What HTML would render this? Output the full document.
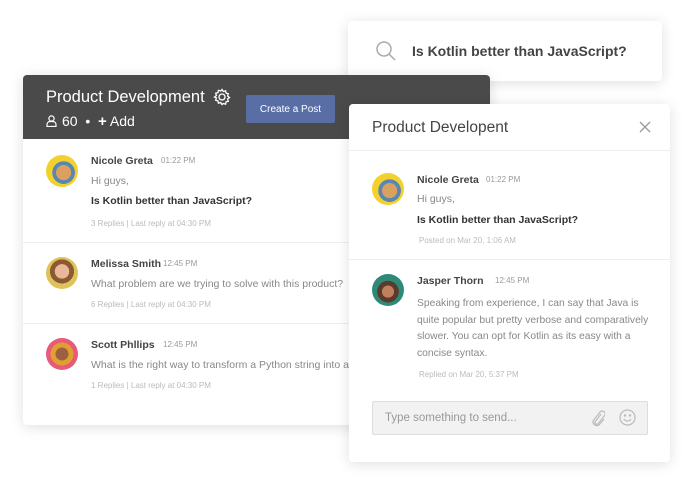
<!DOCTYPE html>
<html><head><style>
*{margin:0;padding:0;box-sizing:border-box}
body{width:693px;height:486px;background:#fff;font-family:"Liberation Sans",sans-serif;position:relative;overflow:hidden;color:#333}
.a{position:absolute;white-space:nowrap}
.card{position:absolute;background:#fff;border-radius:4px;box-shadow:0 2px 14px rgba(0,0,0,.13)}
.nm{font-size:10.5px;font-weight:bold;color:#444}
.tm{font-size:8px;color:#999}
.tx{font-size:10.5px;color:#888}
.bd{font-size:10.5px;font-weight:bold;color:#333}
.mt{font-size:8px;color:#bbb}
.av{position:absolute;width:32px;height:32px;border-radius:50%}
.y{background:radial-gradient(circle at 55% 55%,#d9a060 0 30%,#5a86b0 31% 45%,#f3d12c 46%)}
.line{position:absolute;height:1px;background:#eee}
</style></head><body>

<div class="card" style="left:348px;top:21px;width:314px;height:60px">
 <svg class="a" style="left:27px;top:19px" width="22" height="22" viewBox="0 0 22 22" fill="none" stroke="#aaa" stroke-width="1.5"><circle cx="9" cy="9" r="7"/><path d="M14 14l6 6"/></svg>
 <div class="a" style="left:64px;top:22px;font-size:14px;font-weight:bold;color:#444">Is Kotlin better than JavaScript?</div>
</div>

<div class="card" style="left:23px;top:75px;width:467px;height:350px;overflow:hidden">
 <div class="a" style="left:0;top:0;width:467px;height:64px;background:#4a4a4a"></div>
 <div class="a" style="left:23px;top:13px;font-size:16.5px;color:#fff">Product Development</div>
 <svg class="a" style="left:190px;top:13px" width="18" height="18" viewBox="0 0 18 18" fill="none" stroke="#fff" stroke-width="1.3"><circle cx="9" cy="9" r="3"/><path d="M9 1.5l1.3 2 2.3-.7.4 2.3 2.3.6-.7 2.3 1.9 1.5-1.9 1.5.7 2.3-2.3.6-.4 2.3-2.3-.7L9 16.5l-1.3-2-2.3.7-.4-2.3-2.3-.6.7-2.3L1.5 9l1.9-1.5-.7-2.3 2.3-.6.4-2.3 2.3.7z"/></svg>
 <svg class="a" style="left:23px;top:40px" width="11" height="12" viewBox="0 0 11 12" fill="none" stroke="#fff" stroke-width="1.2"><circle cx="5.5" cy="3.5" r="2.6"/><path d="M1 11.5v-2a3 3 0 013-3h3a3 3 0 013 3v2z"/></svg>
 <div class="a" style="left:39px;top:38px;font-size:14px;color:#fff">60 &nbsp;• &nbsp;<b style="font-size:15px">+</b> Add</div>
 <div class="a" style="left:223px;top:20px;width:89px;height:28px;background:#5a6ea6;border-radius:2px;color:#fff;font-size:10px;text-align:center;line-height:30px">Create a Post</div>

 <div class="av y" style="left:23px;top:80px"></div>
 <div class="a nm" style="left:68px;top:80px">Nicole Greta</div><div class="a tm" style="left:138px;top:81px">01:22 PM</div>
 <div class="a tx" style="left:68px;top:100px">Hi guys,</div>
 <div class="a bd" style="left:68px;top:120px">Is Kotlin better than JavaScript?</div>
 <div class="a mt" style="left:68px;top:144px">3 Replies | Last reply at 04:30 PM</div>
 <div class="line" style="left:0;top:167px;width:467px"></div>

 <div class="av" style="left:23px;top:182px;background:radial-gradient(circle at 50% 45%,#e9b89a 0 30%,#8a5a30 31% 50%,#e0c25a 51%)"></div>
 <div class="a nm" style="left:68px;top:183px">Melissa Smith</div><div class="a tm" style="left:140px;top:184px">12:45 PM</div>
 <div class="a tx" style="left:68px;top:203px">What problem are we trying to solve with this product?</div>
 <div class="a mt" style="left:68px;top:225px">6 Replies | Last reply at 04:30 PM</div>
 <div class="line" style="left:0;top:248px;width:467px"></div>

 <div class="av" style="left:23px;top:263px;background:radial-gradient(circle at 50% 50%,#9a6040 0 28%,#e0a030 29% 50%,#e85a7a 51%)"></div>
 <div class="a nm" style="left:68px;top:264px">Scott Phllips</div><div class="a tm" style="left:140px;top:265px">12:45 PM</div>
 <div class="a tx" style="left:68px;top:284px">What is the right way to transform a Python string into a</div>
 <div class="a mt" style="left:68px;top:306px">1 Replies | Last reply at 04:30 PM</div>
</div>

<div class="card" style="left:349px;top:104px;width:321px;height:358px">
 <div class="a" style="left:23px;top:15px;font-size:15.5px;color:#444">Product Developent</div>
 <svg class="a" style="left:290px;top:17px" width="12" height="12" viewBox="0 0 12 12" stroke="#999" stroke-width="1.3"><path d="M1 1l10 10M11 1L1 11"/></svg>
 <div class="line" style="left:0;top:46px;width:321px"></div>
 <div class="av y" style="left:23px;top:69px"></div>
 <div class="a nm" style="left:68px;top:70px">Nicole Greta</div><div class="a tm" style="left:137px;top:71px">01:22 PM</div>
 <div class="a tx" style="left:68px;top:89px">Hi guys,</div>
 <div class="a bd" style="left:68px;top:110px">Is Kotlin better than JavaScript?</div>
 <div class="a mt" style="left:70px;top:132px">Posted on Mar 20, 1:06 AM</div>
 <div class="line" style="left:0;top:155px;width:321px"></div>
 <div class="av" style="left:23px;top:170px;background:radial-gradient(circle at 50% 55%,#c08060 0 25%,#5a3a2a 26% 45%,#2e8a78 46%)"></div>
 <div class="a nm" style="left:68px;top:171px">Jasper Thorn</div><div class="a tm" style="left:146px;top:172px">12:45 PM</div>
 <div class="a tx" style="left:68px;top:192px;line-height:16.5px;white-space:normal;width:236px;font-size:10.3px">Speaking from experience, I can say that Java is quite popular but pretty verbose and comparatively slower. You can opt for Kotlin as its easy with a concise syntax.</div>
 <div class="a mt" style="left:70px;top:266px">Replied on Mar 20, 5:37 PM</div>
 <div class="a" style="left:23px;top:297px;width:276px;height:34px;background:#f2f2f2;border:1px solid #ddd;border-radius:2px"></div>
 <div class="a" style="left:36px;top:308px;font-size:11.5px;color:#999">Type something to send...</div>
 <svg class="a" style="left:242px;top:305px" width="14" height="18" viewBox="0 0 14 18" fill="none" stroke="#bbb" stroke-width="1.2"><path d="M10 5l-6 8a2 2 0 003 2l7-9a3 3 0 00-5-3l-7 9a4 4 0 006 4l5-6"/></svg>
 <svg class="a" style="left:270px;top:305px" width="17" height="17" viewBox="0 0 17 17" fill="none" stroke="#bbb" stroke-width="1.2"><circle cx="8.5" cy="8.5" r="7.5"/><path d="M5 10a4 4 0 007 0"/><circle cx="6" cy="6.5" r=".6" fill="#bbb"/><circle cx="11" cy="6.5" r=".6" fill="#bbb"/></svg>
</div>
</body></html>
